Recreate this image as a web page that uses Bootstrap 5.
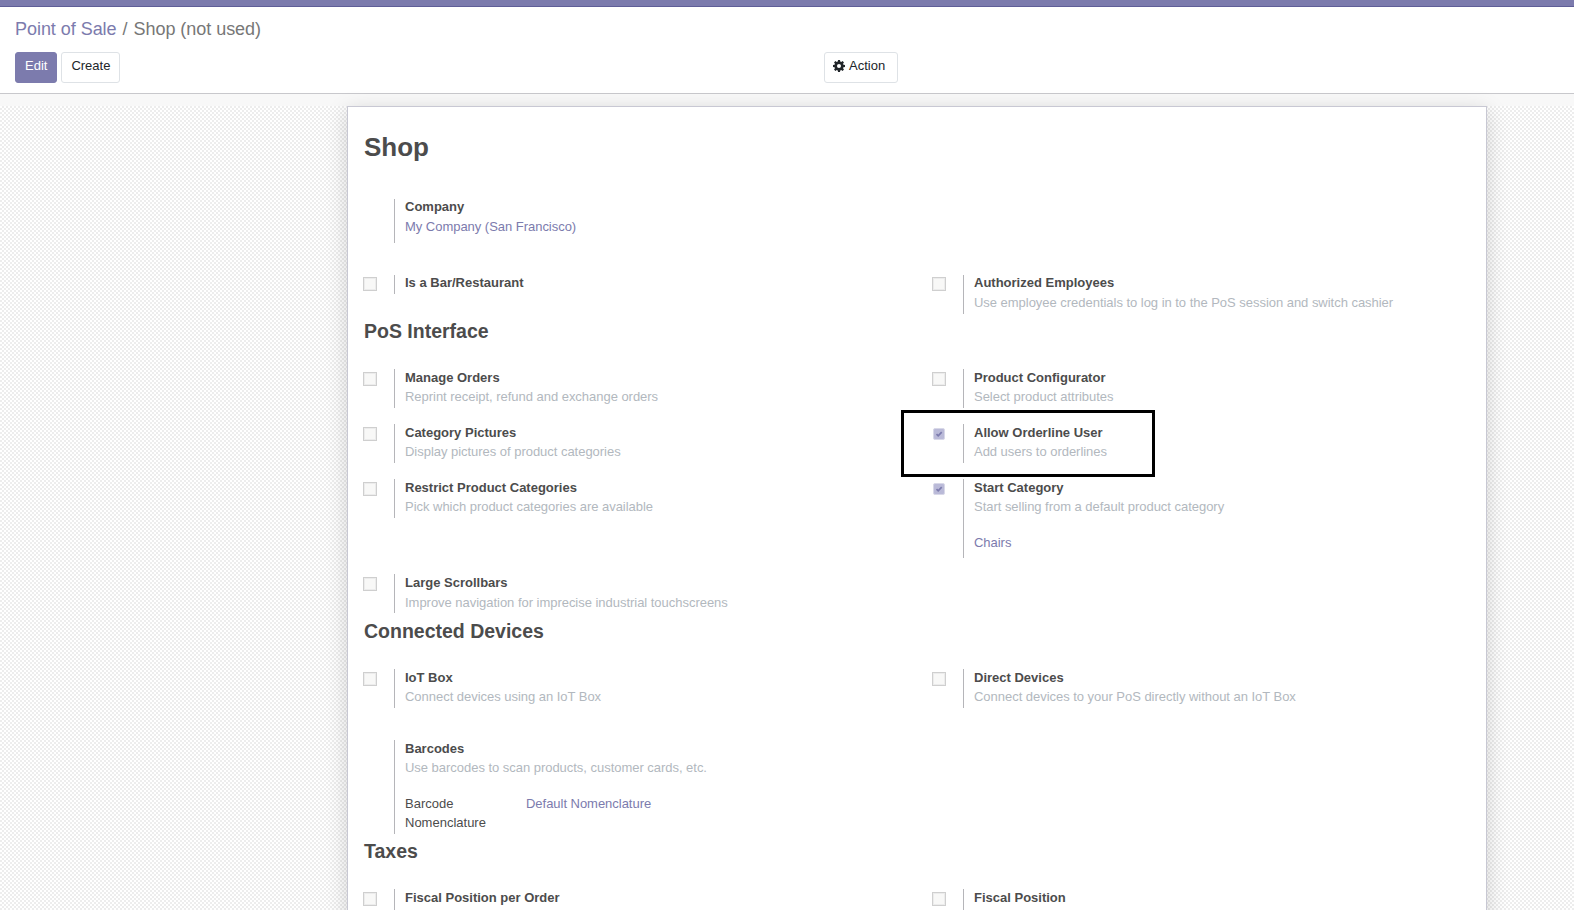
<!DOCTYPE html>
<html lang="en">
<head>
<meta charset="utf-8">
<meta name="viewport" content="width=device-width, initial-scale=1">
<title>Shop (not used) - Point of Sale</title>
<link href="https://cdn.jsdelivr.net/npm/bootstrap@5.3.0/dist/css/bootstrap.min.css" rel="stylesheet">
<style>
  :root { --brand: #7c7bad; }
  html, body { height: 100%; }
  body { font: 13px/19px "Liberation Sans", Arial, sans-serif; color: #4c4c4c; overflow: hidden; background: #f8f8f8; }
  a { color: var(--brand); text-decoration: none; }
  .topbar { height: 7px; background: var(--brand); border-bottom: 1px solid #5f5e97; }
  .control-panel { height: 87px; padding: 9px 15px 0; border-bottom: 1px solid #c8c8cc; }
  .crumbs { font-size: 18px; line-height: 27px; letter-spacing: -.04px; color: #777; margin-bottom: 9px; --bs-breadcrumb-divider-color: #777; }
  .crumbs .breadcrumb-item + .breadcrumb-item { padding-left: 6px; }
  .crumbs .breadcrumb-item + .breadcrumb-item::before { padding-right: 6px; }
  .crumbs .active { color: #777; }
  .btn { font-size: 13px; line-height: 19px; height: 31px; border-radius: 3px; padding: 3px 9px 0; color: #212529; display: inline-flex; align-items: flex-start; }
  .btn-brand, .btn-brand:hover { background: var(--brand); border-color: var(--brand); color: #fff; }
  .btn-plain { background: #fff; border-color: #dee2e6; }
  .btn-action { padding-left: 8px; padding-right: 12px; }
  .btn-action svg { margin: 4px 4px 0 0; }
  .action-cell { padding-left: 37px; }
  .content-area { height: 804px; margin-top: 12px; background: repeating-conic-gradient(#ededed 0 25%, #fff 0 50%) 0 0 / 4px 4px; }
  .sheet { width: 1140px; height: 830px; margin-left: 347px; background: #fff; border: 1px solid #c8c8d3; box-shadow: 0 5px 20px rgba(0,0,0,.17); }
  .sheet h1 { font-size: 26px; line-height: 31px; font-weight: 700; margin: 0; padding: 25px 16px 36px; }
  .sheet h2 { font-size: 19.5px; line-height: 24px; font-weight: 700; margin: 0; padding: 5px 16px 0; height: 55px; }
  .sheet h2.devices { height: 56px; padding-top: 6px; }
  .settings-row { --bs-gutter-x: 0; margin-bottom: 16px; }
  .settings-row.spaced { margin-bottom: 32px; }
  .settings-row.last { margin-bottom: 0; }
  .pane-left { width: 46px; padding: 3px 0 0 15px; }
  .pane-right { border-left: 1px solid #b5b5b9; padding-left: 10px; height: 39px; }
  .pane-right > .fw-bold { margin-top: -1px; }
  .hint, .pane-right a { letter-spacing: -.03px; }
  .hint { color: #b2b8be; }
  .loose .hint, .loose a { display: block; margin-top: 1px; }
  .first .pane-left { padding-top: 2px; }
  .first .pane-right > .fw-bold { margin-top: -2px; }
  .h-single { height: 19px; }
  .h-company { height: 44px; }
  .h-start { height: 79px; }
  .h-barcodes { height: 94px; }
  .extra { margin-top: 17px; }
  .field-label { width: 121px; }
  .box { display: block; width: 14px; height: 14px; background: #f8f8f7; border: 1px solid #cfcfcf; box-shadow: inset 0 0 0 1px #ececec; }
  .box-on { display: block; width: 12px; height: 12px; margin: 1px; background: #babad8; border: 1px solid #d8d8e8; border-radius: 2px; }
  .box-on svg { display: block; width: 10px; height: 10px; }
  .highlight { left: -16px; top: -14px; width: 254px; height: 67px; border: 3px solid #000; }
</style>
</head>
<body>
<div class="topbar"></div>
<header class="control-panel bg-white">
  <ol class="breadcrumb crumbs">
    <li class="breadcrumb-item"><a href="#">Point of Sale</a></li>
    <li class="breadcrumb-item active">Shop (not used)</li>
  </ol>
  <div class="row g-0">
    <div class="col-6 d-flex gap-1"><button class="btn btn-brand">Edit</button><button class="btn btn-plain">Create</button></div>
    <div class="col-6 action-cell"><button class="btn btn-plain btn-action"><svg width="12" height="12" viewBox="0 0 16 16"><path fill="#212529" fill-rule="evenodd" d="M6.700 0h2.600l.4 2.100 1.300.5L12.800 1.400l1.800 1.800L13.400 5l.5 1.300 2.100.4v2.600l-2.100.4-.5 1.300 1.200 1.800-1.800 1.800L11 13.400l-1.300.5L9.300 16H6.700l-.4-2.100-1.300-.5-1.800 1.200-1.800-1.800L2.600 11l-.5-1.300L0 9.300V6.700l2.100-.4.5-1.300-1.200-1.800 1.800-1.800L5 2.600l1.300-.5zM8 5.300a2.700 2.700 0 1 0 0 5.400 2.700 2.700 0 0 0 0-5.400z"/></svg>Action</button></div>
  </div>
</header>
<main class="content-area">
  <div class="sheet">
    <h1>Shop</h1>
    <div class="row settings-row first spaced">
      <div class="col-6 d-flex"><div class="pane-left"></div><div class="pane-right loose h-company"><div class="fw-bold">Company</div><a href="#">My Company (San Francisco)</a></div></div>
    </div>
    <div class="row settings-row first last">
      <div class="col-6 d-flex align-items-start"><div class="pane-left"><span class="box"></span></div><div class="pane-right h-single"><div class="fw-bold">Is a Bar/Restaurant</div></div></div>
      <div class="col-6 d-flex"><div class="pane-left"><span class="box"></span></div><div class="pane-right loose"><div class="fw-bold">Authorized Employees</div><div class="hint">Use employee credentials to log in to the PoS session and switch cashier</div></div></div>
    </div>
    <h2>PoS Interface</h2>
    <div class="row settings-row">
      <div class="col-6 d-flex"><div class="pane-left"><span class="box"></span></div><div class="pane-right"><div class="fw-bold">Manage Orders</div><div class="hint">Reprint receipt, refund and exchange orders</div></div></div>
      <div class="col-6 d-flex"><div class="pane-left"><span class="box"></span></div><div class="pane-right"><div class="fw-bold">Product Configurator</div><div class="hint">Select product attributes</div></div></div>
    </div>
    <div class="row settings-row">
      <div class="col-6 d-flex"><div class="pane-left"><span class="box"></span></div><div class="pane-right"><div class="fw-bold">Category Pictures</div><div class="hint">Display pictures of product categories</div></div></div>
      <div class="col-6 d-flex position-relative"><div class="pane-left"><span class="box-on"><svg viewBox="0 0 10 10"><path d="M2.500 5.200l1.700 1.700L7.700 3.200" fill="none" stroke="#7c7bad" stroke-width="1.700"/></svg></span></div><div class="pane-right"><div class="fw-bold">Allow Orderline User</div><div class="hint">Add users to orderlines</div></div><div class="highlight position-absolute"></div></div>
    </div>
    <div class="row settings-row">
      <div class="col-6 d-flex"><div class="pane-left"><span class="box"></span></div><div class="pane-right"><div class="fw-bold">Restrict Product Categories</div><div class="hint">Pick which product categories are available</div></div></div>
      <div class="col-6 d-flex"><div class="pane-left"><span class="box-on"><svg viewBox="0 0 10 10"><path d="M2.500 5.200l1.700 1.700L7.700 3.200" fill="none" stroke="#7c7bad" stroke-width="1.700"/></svg></span></div><div class="pane-right h-start"><div class="fw-bold">Start Category</div><div class="hint">Start selling from a default product category</div><div class="extra"><a href="#">Chairs</a></div></div></div>
    </div>
    <div class="row settings-row last">
      <div class="col-6 d-flex"><div class="pane-left"><span class="box"></span></div><div class="pane-right loose"><div class="fw-bold">Large Scrollbars</div><div class="hint">Improve navigation for imprecise industrial touchscreens</div></div></div>
    </div>
    <h2 class="devices">Connected Devices</h2>
    <div class="row settings-row spaced">
      <div class="col-6 d-flex"><div class="pane-left"><span class="box"></span></div><div class="pane-right"><div class="fw-bold">IoT Box</div><div class="hint">Connect devices using an IoT Box</div></div></div>
      <div class="col-6 d-flex"><div class="pane-left"><span class="box"></span></div><div class="pane-right"><div class="fw-bold">Direct Devices</div><div class="hint">Connect devices to your PoS directly without an IoT Box</div></div></div>
    </div>
    <div class="row settings-row last">
      <div class="col-6 d-flex"><div class="pane-left"></div><div class="pane-right h-barcodes"><div class="fw-bold">Barcodes</div><div class="hint">Use barcodes to scan products, customer cards, etc.</div><div class="d-flex extra"><div class="field-label">Barcode<br>Nomenclature</div><a href="#">Default Nomenclature</a></div></div></div>
    </div>
    <h2>Taxes</h2>
    <div class="row settings-row last">
      <div class="col-6 d-flex"><div class="pane-left"><span class="box"></span></div><div class="pane-right"><div class="fw-bold">Fiscal Position per Order</div></div></div>
      <div class="col-6 d-flex"><div class="pane-left"><span class="box"></span></div><div class="pane-right"><div class="fw-bold">Fiscal Position</div></div></div>
    </div>
  </div>
</main>
<script src="https://cdn.jsdelivr.net/npm/bootstrap@5.3.0/dist/js/bootstrap.bundle.min.js"></script>
</body>
</html>
